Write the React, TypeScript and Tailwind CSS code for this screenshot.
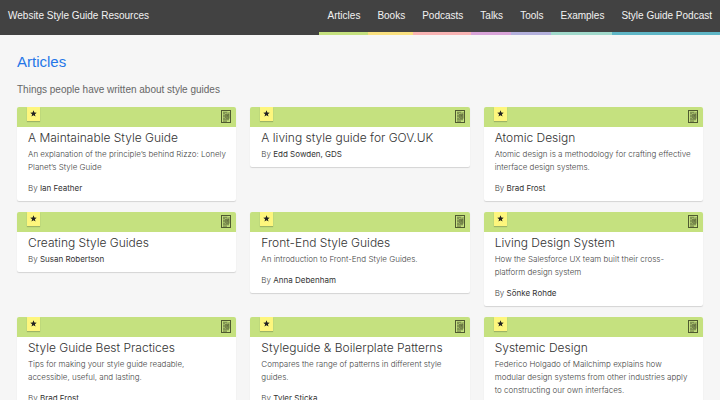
import React from 'react';

interface NavItem {
  label: string;
  border: string;
}

interface Article {
  title: string;
  description?: string;
  author: string;
}

const navItems: NavItem[] = [
  { label: 'Articles', border: 'border-[#c5e17f]' },
  { label: 'Books', border: 'border-[#f9e07f]' },
  { label: 'Podcasts', border: 'border-[#f8b3b3]' },
  { label: 'Talks', border: 'border-[#d8a3d8]' },
  { label: 'Tools', border: 'border-[#b3b0dc]' },
  { label: 'Examples', border: 'border-[#a0d9cb]' },
  { label: 'Style Guide Podcast', border: 'border-[#5fb6c6]' },
];

const articles: Article[] = [
  {
    title: 'A Maintainable Style Guide',
    description: 'An explanation of the principle’s behind Rizzo: Lonely Planet’s Style Guide',
    author: 'Ian Feather',
  },
  { title: 'A living style guide for GOV.UK', author: 'Edd Sowden, GDS' },
  {
    title: 'Atomic Design',
    description: 'Atomic design is a methodology for crafting effective interface design systems.',
    author: 'Brad Frost',
  },
  { title: 'Creating Style Guides', author: 'Susan Robertson' },
  {
    title: 'Front-End Style Guides',
    description: 'An introduction to Front-End Style Guides.',
    author: 'Anna Debenham',
  },
  {
    title: 'Living Design System',
    description: 'How the Salesforce UX team built their cross-platform design system',
    author: 'Sönke Rohde',
  },
  {
    title: 'Style Guide Best Practices',
    description: 'Tips for making your style guide readable, accessible, useful, and lasting.',
    author: 'Brad Frost',
  },
  {
    title: 'Styleguide & Boilerplate Patterns',
    description: 'Compares the range of patterns in different style guides.',
    author: 'Tyler Sticka',
  },
  {
    title: 'Systemic Design',
    description:
      'Federico Holgado of Mailchimp explains how modular design systems from other industries apply to constructing our own interfaces.',
    author: 'Federico Holgado',
  },
];

const ArticleIcon: React.FC = () => (
  <svg className="h-[13px] w-[10px]" viewBox="0 0 20 26" fill="none" stroke="#4f5a30" aria-hidden="true">
    <rect x="1" y="1" width="18" height="24" strokeWidth="2" />
    <path d="M4 4.5h9M4 7.5h4M4 10.5h4M4 13.5h4M4 16.5h4M4 19.5h12M4 22.3h8" strokeWidth="1.5" />
    <rect x="9.5" y="8" width="6.5" height="8.5" fill="#8fa35c" strokeWidth="1.5" />
    <path d="M11 11h3.5M11 13.5h3.5M16 4v3" strokeWidth="1.3" />
  </svg>
);

const StarIcon: React.FC = () => (
  <svg className="h-[7px] w-[7px]" viewBox="0 0 24 24" fill="#222" aria-hidden="true">
    <path d="M12 1l3 7.6 8 .6-6.2 5.2 2 8L12 18l-6.8 4.4 2-8L1 9.200l8-.6z" />
  </svg>
);

const ArticleCard: React.FC<{ article: Article }> = ({ article }) => (
  <article className="overflow-hidden rounded-[2px] bg-white shadow-[0_1px_1px_rgba(0,0,0,0.14)]">
    <div className="flex h-5 items-start justify-between bg-[#c5e17f] pr-[5px] pl-[10px]">
      <span className="flex h-[14px] w-[13px] items-center justify-center bg-[#fdf67d] pb-0.5 shadow-[0_1px_1px_rgba(0,0,0,0.2)]">
        <StarIcon />
      </span>
      <span className="pt-[3px]">
        <ArticleIcon />
      </span>
    </div>
    <div className="pt-0.5 pr-[10px] pb-[6px] pl-[11px] font-['Inter','Liberation_Sans',sans-serif] text-[8px] leading-[13px] font-light text-[#444]">
      <h2 className="mb-px text-[12px] leading-[18px] text-[#333]">
        <a href="#">{article.title}</a>
      </h2>
      {article.description && <p className="mb-2">{article.description}</p>}
      <p>
        By <span className="font-normal text-[#333]">{article.author}</span>
      </p>
    </div>
  </article>
);

const App: React.FC = () => (
  <div className="min-h-screen bg-[#f6f6f6] font-['Liberation_Sans',Arial,sans-serif]">
    <header className="flex items-stretch justify-between bg-[#424242] text-[10px] leading-4 text-[#f2f2f2]">
      <a href="#" className="px-2 pt-2">
        Website Style Guide Resources
      </a>
      <nav className="flex">
        {navItems.map((item) => (
          <a key={item.label} href="#" className={`border-b-[3px] py-2 pr-2 pl-[9px] ${item.border}`}>
            {item.label}
          </a>
        ))}
      </nav>
    </header>

    <main className="px-[17px] pt-[17px] pb-4">
      <h1 className="text-[15px] leading-5 text-[#2476e8]">Articles</h1>
      <p className="mt-[10px] mb-[9px] text-[10px] leading-4 text-[#666]">
        Things people have written about style guides
      </p>
      <div className="grid grid-cols-3 items-start gap-x-[14px] gap-y-[11px]">
        {articles.map((article) => (
          <ArticleCard key={article.title} article={article} />
        ))}
      </div>
    </main>
  </div>
);

export default App;
